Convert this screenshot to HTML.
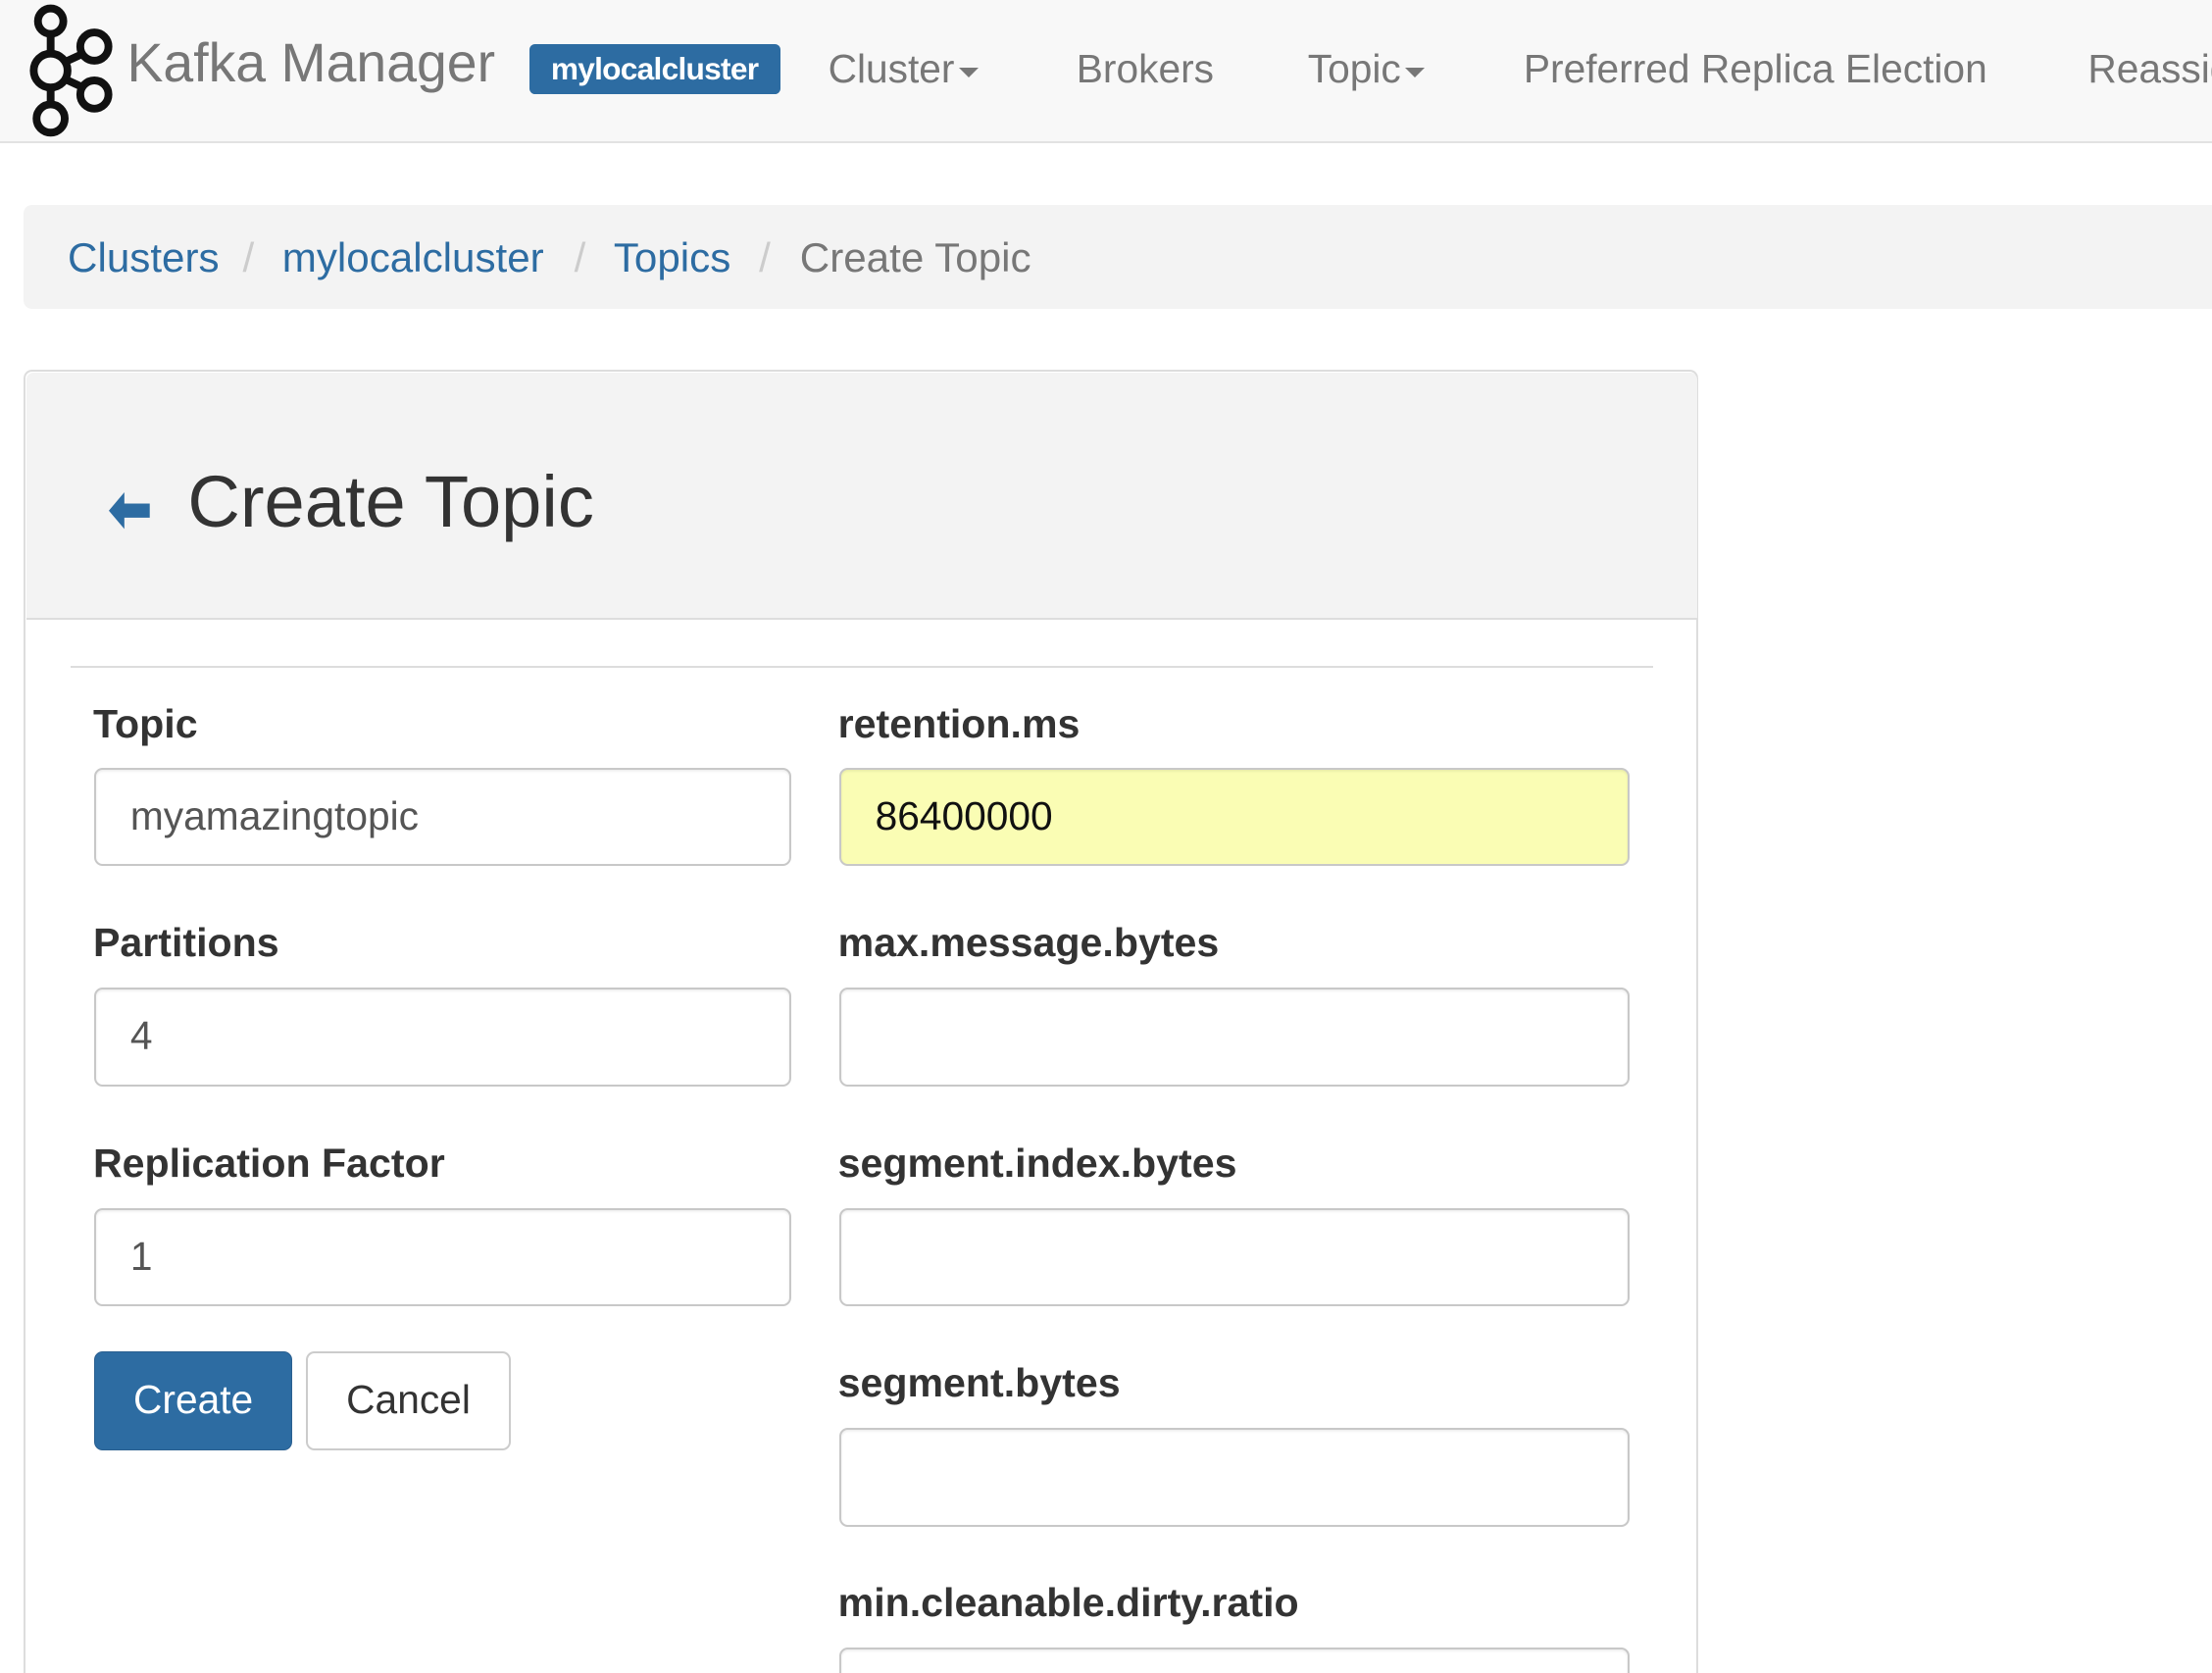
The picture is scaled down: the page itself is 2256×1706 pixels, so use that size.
<!DOCTYPE html>
<html><head><meta charset="utf-8"><style>
html,body{margin:0;padding:0;background:#fff;overflow:hidden}
body{width:2256px;height:1706px}
#w{zoom:1.43878;width:1568px;height:1186px;position:relative;font-family:"Liberation Sans",Helvetica,Arial,sans-serif;overflow:hidden}
.a{position:absolute;white-space:nowrap}
.nav{left:0;top:0;width:1568px;height:100px;background:#f8f8f8;border-bottom:2px solid #e2e2e2}
.ni{font-size:28.3px;color:#777;top:33px}
.car{display:inline-block;width:0;height:0;border-left:7px solid transparent;border-right:7px solid transparent;border-top:7px solid #777;vertical-align:middle;margin-left:3px}
.bc{left:17px;top:145px;width:1600px;height:74px;background:#f3f3f3;border-radius:6px}
.bt{font-size:29.3px;top:166px;color:#2d6ca2}
.sl{color:#ccc}
.panel{left:17px;top:262px;width:1184px;height:1000px;border:2px solid #ddd;border-radius:6px;background:#fff}
.ph{left:19px;top:264px;width:1184px;height:174px;background:#f3f3f3;border-bottom:2px solid #ddd;border-radius:5px 5px 0 0}
.lb{font-size:28.6px;font-weight:bold;color:#333}
.in{border:2px solid #c8c8c8;border-radius:6px;background:#fff;box-sizing:border-box;height:70px;font-size:28.3px;color:#555;padding-left:24px;line-height:66px;box-shadow:inset 0 1px 2px rgba(0,0,0,.08)}
</style></head><body><div id="w">
<div class="a nav"></div>
<svg class="a" style="left:14px;top:0" width="72" height="100" viewBox="0 0 72 100">
<g fill="none" stroke="#111" stroke-width="5.5">
<line x1="22" y1="24" x2="22" y2="38"/><line x1="22" y1="62" x2="22" y2="73"/>
<line x1="32" y1="44" x2="45" y2="38"/><line x1="32" y1="56" x2="45" y2="62"/>
<circle cx="22" cy="15" r="9"/><circle cx="22" cy="50" r="12"/><circle cx="22" cy="84" r="10"/>
<circle cx="53" cy="33" r="10"/><circle cx="53" cy="67" r="10"/></g></svg>
<div class="a" style="left:90px;top:22px;font-size:38.5px;color:#777">Kafka Manager</div>
<div class="a" style="left:375px;top:31px;width:178px;height:36px;background:#2d6ca2;border-radius:4px;color:#fff;font-weight:bold;font-size:22px;line-height:36px;text-align:center;letter-spacing:-0.5px">mylocalcluster</div>
<div class="a ni" style="left:587px">Cluster<span class="car"></span></div>
<div class="a ni" style="left:763px">Brokers</div>
<div class="a ni" style="left:927px">Topic<span class="car"></span></div>
<div class="a ni" style="left:1080px">Preferred Replica Election</div>
<div class="a ni" style="left:1480px">Reassign Partitions</div>
<div class="a bc"></div>
<div class="a bt" style="left:48px">Clusters</div>
<div class="a bt sl" style="left:172px">/</div>
<div class="a bt" style="left:200px">mylocalcluster</div>
<div class="a bt sl" style="left:407px">/</div>
<div class="a bt" style="left:435px">Topics</div>
<div class="a bt sl" style="left:538px">/</div>
<div class="a bt" style="left:567px;color:#777">Create Topic</div>
<div class="a panel"></div>
<div class="a ph"></div>
<svg class="a" style="left:77px;top:349px" width="30" height="26" viewBox="0 0 30 26"><path d="M0 13 L11 0 L11 8 L29 8 L29 18 L11 18 L11 26 Z" fill="#2d6ca2"/></svg>
<div class="a" style="left:133px;top:326px;font-size:51.5px;color:#333">Create Topic</div>
<div class="a" style="left:50px;top:472px;width:1122px;height:1px;background:#ddd"></div>
<div class="a lb" style="left:66px;top:497px">Topic</div>
<div class="a in" style="left:67px;top:544px;width:494px">myamazingtopic</div>
<div class="a lb" style="left:66px;top:652px">Partitions</div>
<div class="a in" style="left:67px;top:700px;width:494px">4</div>
<div class="a lb" style="left:66px;top:808px">Replication Factor</div>
<div class="a in" style="left:67px;top:856px;width:494px">1</div>
<div class="a" style="left:67px;top:958px;width:140px;height:70px;background:#2d6ca2;border:1px solid #2a5f90;border-radius:6px;box-sizing:border-box;color:#fff;font-size:28.3px;line-height:68px;text-align:center">Create</div>
<div class="a" style="left:217px;top:958px;width:145px;height:70px;background:#fff;border:2px solid #ccc;border-radius:6px;box-sizing:border-box;color:#333;font-size:28.3px;line-height:66px;text-align:center">Cancel</div>
<div class="a lb" style="left:594px;top:497px">retention.ms</div>
<div class="a in" style="left:595px;top:544px;width:560px;background:#fafdb4;color:#111">86400000</div>
<div class="a lb" style="left:594px;top:652px">max.message.bytes</div>
<div class="a in" style="left:595px;top:700px;width:560px"></div>
<div class="a lb" style="left:594px;top:808px">segment.index.bytes</div>
<div class="a in" style="left:595px;top:856px;width:560px"></div>
<div class="a lb" style="left:594px;top:964px">segment.bytes</div>
<div class="a in" style="left:595px;top:1012px;width:560px"></div>
<div class="a lb" style="left:594px;top:1120px">min.cleanable.dirty.ratio</div>
<div class="a in" style="left:595px;top:1168px;width:560px"></div>
</div></body></html>
